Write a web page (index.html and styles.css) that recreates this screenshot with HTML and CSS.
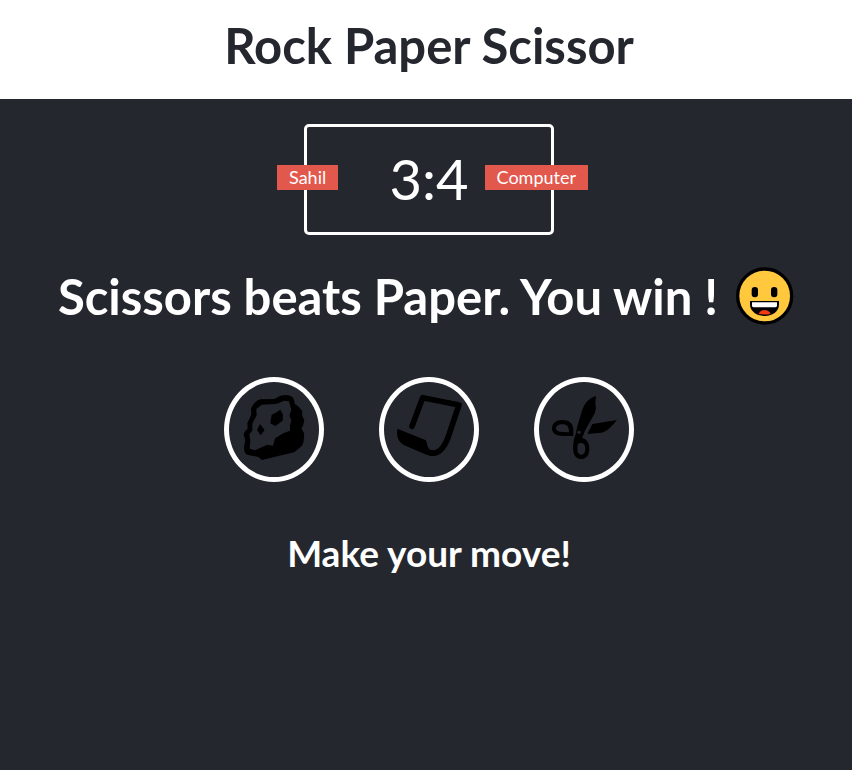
FILE: index.html
```html
<!DOCTYPE html>
<html lang="en">
<head>
<meta charset="utf-8">
<title>Rock Paper Scissor</title>
<link rel="stylesheet" href="styles.css">
</head>
<body>
<header class="header"><h1 class="title">Rock Paper Scissor</h1></header>
<main class="game">
  <div class="score-board">
    <div class="badge badge-user">Sahil</div>
    <div class="badge badge-computer">Computer</div>
    <span>3</span>:<span>4</span>
  </div>
  <div class="result">
    <p class="result-text">Scissors beats Paper. You win !</p>
    <svg class="emoji" viewBox="36 20 174 174" role="img" aria-label="Grinning face">
      <circle cx="122" cy="107" r="81" fill="#ffc83d" stroke="#000" stroke-width="10"/>
      <rect x="83" y="80" width="19" height="31" rx="9"/>
      <rect x="141" y="80" width="19" height="31" rx="9"/>
      <path d="M78 122H165V132C165 153 147 167 122 167S78 153 78 132Z"/>
      <path d="M84 126H159V136Q159 141 153 141H90Q84 141 84 136Z" fill="#fff"/>
      <path d="M104 160Q110 149 122 149T140 160Q122 165 104 160Z" fill="#f03a17"/>
    </svg>
  </div>
  <div class="choices">
    <button class="choice" type="button" aria-label="Rock">
      <svg viewBox="42 36 270 285">
        <path fill-rule="evenodd" d="M178 87L195 78Q210 72 226 77Q239 83 239 101L251 110L262 124L261 136L268 151L264 168L259 175L267 189Q269 214 261 227L238 247Q190 258 141 270L130 261L96 254Q86 248 87 231L91 210L86 195Q87 184 98 176L97 160L109 133L108 115Q119 92 136 88ZM181 102L140 104L124 117L125 136L112 161L112 182L103 193L106 211L104 236L120 241L157 224L174 227L180 205L205 190L225 182V166L229 151L223 137L229 120L222 94L207 92L192 99Z"/>
        <path d="M170 134L181 129L196 119L204 134L203 152L181 168L166 160ZM135 162L149 180L137 196L126 180Z"/>
      </svg>
    </button>
    <button class="choice" type="button" aria-label="Paper">
      <svg viewBox="42 36 270 285">
        <path class="line" d="M126 169L158 83L267 105L239 188C225 234 206 253 183 249"/>
        <path d="M82 176L166 210C171 211 169 225 177 236Q183 242 190 240L185 258Q172 257 159 250L108 228C89 220 78 205 82 176Z"/>
      </svg>
    </button>
    <button class="choice" type="button" aria-label="Scissors">
      <svg viewBox="42 36 270 285">
        <path d="M213 77C190 85 176 103 170 126L156 172L153 188L148 208L170 208L181 180L210 128Q215 113 211 98ZM202 162L276 150C260 169 247 184 230 188L187 192Z"/>
        <path fill-rule="evenodd" d="M145 198H116C92 198 81 190 81 175S94 150 112 150C133 150 144 160 145 178ZM132 187C132 170 126 163 112 163C100 163 93 168 93 175S100 186 114 186Z"/>
        <path fill-rule="evenodd" d="M149 200C143 222 143 240 147 252C151 262 158 267 168 267C184 267 193 255 193 236C193 218 186 206 168 203ZM159 222C155 242 159 254 168 254C177 254 181 247 181 237C181 225 177 219 169 219Q162 219 159 222Z"/>
        <circle cx="162" cy="187" r="5" fill="#25272f"/>
      </svg>
    </button>
  </div>
  <p class="prompt">Make your move!</p>
</main>
</body>
</html>
```
FILE: styles.css
```css
* { box-sizing: border-box; margin: 0; padding: 0; }

body {
  min-height: 100vh;
  background: #25272f;
  color: #fff;
  font-family: Lato, "Noto Sans", sans-serif;
}

.header {
  padding: 15px 0 24px 6px;
  background: #fff;
  color: #25272f;
  text-align: center;
}

.title { font-size: 49px; line-height: 60px; font-weight: 700; }

.game {
  display: flex;
  flex-direction: column;
  align-items: center;
  padding: 25px 0 20px 6px;
}

.score-board {
  position: relative;
  width: 250px;
  padding: 16px 0 17px;
  border: 3px solid #fff;
  border-radius: 5px;
  font-size: 56px;
  line-height: 72px;
  text-align: center;
}

.badge {
  position: absolute;
  top: 38px;
  padding: 0 12px;
  background: #e2584d;
  font-size: 18px;
  line-height: 25px;
}

.badge-user { left: -30px; }
.badge-computer { right: -37px; }

.result {
  display: flex;
  align-items: center;
  justify-content: center;
  gap: 18px;
  margin: 31px 6px 0 0;
  font-size: 49px;
  line-height: 60px;
  font-weight: 700;
}

.emoji { flex: none; width: 58px; height: 58px; }

.choices { display: flex; gap: 55px; margin-top: 51px; }

.choice {
  width: 100px;
  height: 105px;
  border: 5px solid #fff;
  border-radius: 50%;
  background: transparent;
  cursor: pointer;
}

.choice svg { display: block; width: 90px; height: 95px; }

.line { fill: none; stroke: #000; stroke-width: 17; stroke-linecap: round; stroke-linejoin: round; }

.prompt { margin-top: 48px; font-size: 37px; line-height: 46px; font-weight: 700; }
```
